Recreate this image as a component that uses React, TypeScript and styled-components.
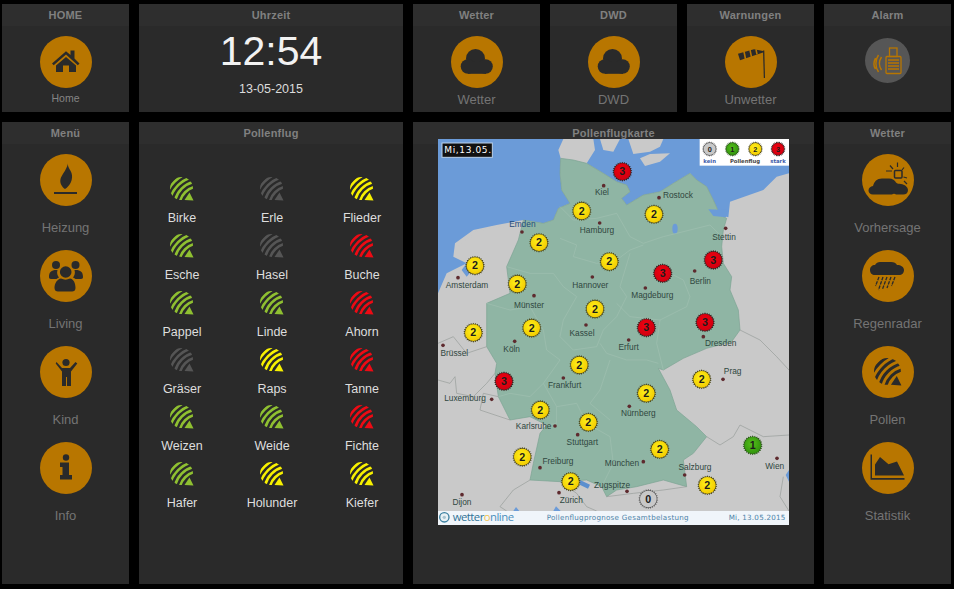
import React, { useId } from "react";
import styled, { createGlobalStyle } from "styled-components";

const Global = createGlobalStyle`
  html, body { margin: 0; background: #000; }
  body { font-family: "Liberation Sans", Arial, sans-serif; }
`;

const Page = styled.div`
  width: 954px;
  height: 589px;
  box-sizing: border-box;
  padding: 4px 0 0 2px;
  display: grid;
  grid-template-columns: 127px 264px 127px 127px 127px 127px;
  grid-template-rows: 108px 462px;
  gap: 10px;
  overflow: hidden;
`;

const Panel = styled.section<{ $span?: number }>`
  background: #2a2a2a;
  grid-column: span ${(p) => p.$span ?? 1};
  display: flex;
  flex-direction: column;
  align-items: center;
  min-width: 0;
`;

const Header = styled.h2`
  margin: 0;
  width: 100%;
  height: 22px;
  flex: none;
  background: #2e2e2e;
  color: #808080;
  font-size: 11px;
  font-weight: 700;
  line-height: 22px;
  letter-spacing: 0.2px;
  text-align: center;
`;

const Item = styled.div`
  display: flex;
  flex-direction: column;
  align-items: center;
  margin-top: 10px;
`;

const Menu = styled.div`
  display: flex;
  flex-direction: column;
  align-items: center;
  gap: 12px;
  padding-top: 10px;
  & > ${Item} { margin-top: 0; }
`;

const Circle = styled.div<{ $size?: number; $muted?: boolean }>`
  width: ${(p) => p.$size ?? 52}px;
  height: ${(p) => p.$size ?? 52}px;
  border-radius: 50%;
  background: ${(p) => (p.$muted ? "#565656" : "#b87600")};
  flex: none;
  & svg { display: block; width: 100%; height: 100%; }
`;

const Label = styled.div<{ $small?: boolean; $tight?: boolean }>`
  color: ${(p) => (p.$small ? "#858585" : "#747474")};
  font-size: ${(p) => (p.$small ? 10.5 : 13)}px;
  line-height: 20px;
  margin-top: ${(p) => (p.$small ? 0 : p.$tight ? 2 : 12)}px;
  white-space: nowrap;
`;

const Clock = styled.div`
  color: #f2f2f2;
  font-size: 41px;
  line-height: 46px;
  margin-top: 2px;
`;

const DateText = styled.div`
  color: #dcdcdc;
  font-size: 12.5px;
  line-height: 16px;
  margin-top: 7px;
`;

const AlarmSlot = styled.div`
  padding-top: 12px;
`;

const PollenGrid = styled.div`
  display: grid;
  grid-template-columns: repeat(3, 90px);
  grid-auto-rows: 57px;
  justify-content: center;
  padding: 33px 0 0 2px;
`;

const PollenCell = styled.div`
  display: flex;
  flex-direction: column;
  align-items: center;
  & svg { display: block; width: 24px; height: 24px; }
`;

const PollenName = styled.div`
  color: #dedede;
  font-size: 12.5px;
  line-height: 16px;
  margin-top: 9px;
`;

const IconPad = styled.div`
  box-sizing: border-box;
  width: 100%;
  height: 100%;
  padding: 12px;
`;

const MapFrame = styled.div`
  margin-top: -5px;
  width: 351px;
  height: 386px;
  flex: none;
  & svg { display: block; }
`;

const CityName = styled.text<{ $blue?: boolean }>`
  font-family: "Liberation Sans", Arial, sans-serif;
  font-size: 25px;
  fill: ${(p) => (p.$blue ? "#1f4c7c" : "#2f4740")};
`;

const MarkDigit = styled.text<{ $small?: boolean }>`
  font-family: "Liberation Sans", Arial, sans-serif;
  font-size: ${(p) => (p.$small ? 22 : 32)}px;
  font-weight: 700;
  fill: #1c1c1c;
  text-anchor: middle;
`;

const LegendText = styled.text<{ $blue?: boolean }>`
  font-family: "DejaVu Sans", sans-serif;
  font-size: 16px;
  font-weight: 700;
  fill: ${(p) => (p.$blue ? "#3a5aa8" : "#444")};
  text-anchor: middle;
`;

const DateTag = styled.text`
  font-family: "DejaVu Sans", sans-serif;
  font-size: 27px;
  fill: #fff;
`;

const FooterText = styled.text<{ $end?: boolean }>`
  font-family: "DejaVu Sans", sans-serif;
  font-size: 21.5px;
  font-weight: 400;
  fill: #4c83a8;
  text-anchor: ${(p) => (p.$end ? "end" : "middle")};
`;

const Brand = styled.text`
  font-family: "Open Sans", "DejaVu Sans", sans-serif;
  font-size: 34px;
  fill: #2f7396;
`;

const DK = "#2a2a2a";

const Svg = ({ children }: { children: React.ReactNode }) => (
  <svg viewBox="0 0 52 52" fill={DK}>{children}</svg>
);

const HomeIcon = () => (
  <Svg>
    <path d="M12 27.5 26 15.3l4.5 3.7v-4.5h4V22.5l5 5-1.7 1.7L26 18.6 13.7 29.2z" />
    <path d="M16 29.6 26 21l10 8.6V36h-7v-6.5h-6V36h-7z" />
  </Svg>
);

const CloudIcon = () => (
  <Svg>
    <circle cx="24.5" cy="22.5" r="9.5" />
    <circle cx="17" cy="30.5" r="7.3" />
    <circle cx="34.5" cy="30.5" r="7.3" />
    <rect x="17" y="26" width="18" height="11.8" />
  </Svg>
);

const SockIcon = () => (
  <Svg>
    <path d="M38 14.500h1.300L40 42h-1.200z" />
    <path d="M13 17.700 29 13.300 38 15 38 16.500 15 24.300z" />
    <path d="M19 15.500l1.500 7.500M25 14l1.500 6.800M31 13.300l1 5" stroke="#b87600" strokeWidth="1.600" fill="none" />
  </Svg>
);

const AlarmIcon = () => (
  <svg viewBox="0 0 45 45" fill="none" stroke="#b87600" strokeWidth="1.3">
    <rect x="24.5" y="10" width="7.5" height="8.5" />
    <rect x="21" y="18.5" width="15" height="17" rx="1" />
    <path d="M23 22h11M23 25h11M23 28h11M23 31h11" />
    <path d="M16.5 19c-2.6 4-2.6 9 0 13M13.5 17c-3.5 5-3.5 12 0 17M10.5 20c-2 4-2 8 0 11" strokeWidth="1.5" />
  </svg>
);

const FlameIcon = () => (
  <Svg>
    <path d="M28 9.500C27.500 13 30 15 31.500 19 33.500 25 30 32 25 35 22 33 19.500 29 20.500 25 21.500 21 26 17 28 9.500z" />
    <rect x="14" y="38" width="23" height="2" />
  </Svg>
);

const PeopleIcon = () => (
  <Svg>
    <circle cx="16" cy="15" r="4" />
    <circle cx="35.5" cy="15" r="4" />
    <path d="M9 27c0-5 2.500-7 7-7h1.500c-1 3 0 5.500 1.500 7.500-1 .4-2 1-2.500 1.500H11c-1.500 0-2-1-2-2z" />
    <path d="M43 27c0-5-2.500-7-7-7h-1.500c1 3 0 5.500-1.500 7.500 1 .4 2 1 2.500 1.500H41c1.500 0 2-1 2-2z" />
    <circle cx="25.700" cy="22" r="5.800" />
    <path d="M14.500 38c0-5 3-9 6.500-9.500 3 1.500 6 1.500 9 0 3.500.5 5.500 4.500 5.500 9.500 0 2.500-1.500 3.500-3.500 3.500H18c-2 0-3.500-1-3.500-3.500z" />
  </Svg>
);

const KidIcon = () => (
  <Svg>
    <circle cx="26" cy="16.500" r="3.600" />
    <path d="M16.500 16 22 22h8l5.500-6 1.800 1.500-6.300 8V40h-4v-9h-1v9h-4V25.500l-6.300-8z" />
  </Svg>
);

const InfoIcon = () => (
  <Svg>
    <circle cx="26" cy="15.500" r="3.200" />
    <path d="M20 20.500h9V33h3v4.500H20V33h2.500v-8H20z" />
  </Svg>
);

const SunCloudIcon = () => (
  <Svg>
    <path d="M11 40.500c-3 0-4.500-2-4.500-4 0-2.500 2-4 4.500-4.500 1-4.500 4-7.500 9-7.500h7c3.500 0 6 2 7 4 1 1.500 3 1 5 1.500 3.500.5 7 3 7 6 0 3-2 4.500-5 4.500H34c-1-1-3-1-4 0z" />
    <rect x="32.500" y="16.500" width="7.500" height="7.500" rx="1" fill="none" stroke={DK} strokeWidth="1.500" />
    <path d="M24 17h6M28 11.500l3 3.500M35.500 8.500v4.500M42 13.500l-2 2.500M45 24l-3.500-1M45 30l-3-3" fill="none" stroke={DK} strokeWidth="1.200" />
  </Svg>
);

const RainIcon = () => (
  <Svg>
    <path d="M8 20c0-3 2-5 5-5 1-2 3-3 5-3h11c3 0 5 1 6 3 4 0 7 2 7 5 0 3-2 5-5 5H13c-3 0-5-2-5-5z" />
    <path d="M17 27l-3.500 9M21 27l-4.500 13M25 27l-4.500 12M29 27l-4 11M33 27l-3.500 9" fill="none" stroke={DK} strokeWidth="1.300" strokeDasharray="3.500 1" />
  </Svg>
);

const PollenShape = ({ color }: { color: string }) => {
  const id = useId();
  return (
    <svg viewBox="0 0 24 24">
      <clipPath id={id}>
        <circle cx="11.500" cy="11.500" r="11.500" />
      </clipPath>
      <g clipPath={`url(#${id})`} fill="none" stroke={color} strokeWidth="2.600">
        <circle cx="29" cy="29" r="19.500" />
        <circle cx="29" cy="29" r="24.500" />
        <circle cx="29" cy="29" r="29.500" />
        <circle cx="29" cy="29" r="34.500" />
      </g>
      <path d="M23.500 23.500 14.500 23 19.500 15.500z" fill={color} />
    </svg>
  );
};

const PollenIcon = () => (
  <IconPad>
    <PollenShape color={DK} />
  </IconPad>
);

const ChartIcon = () => (
  <Svg>
    <path d="M8.500 12.500h1.500V36h32.500v1.800H8.500z" />
    <path d="M13 33.500V22.500l5-7.500 8.500 7.300 8.500-2.800 7 14z" />
  </Svg>
);

const Sun = ({ x, y, level, small }: { x: number; y: number; level: number; small?: boolean }) => {
  const id = useId();
  const r = small ? 23 : 30;
  const stops: [string, string][] = [
    ["#c8c8c8", "#c8c8c8"],
    ["#55c01a", "#2f8f0c"],
    ["#fff21a", "#f2c800"],
    ["#f2000f", "#cc0010"],
  ];
  const pts: string[] = [];
  const n = 26;
  for (let i = 0; i < n * 2; i++) {
    const rad = i % 2 ? r : r - 4.500;
    const a = (i * Math.PI) / n;
    pts.push(`${(x + rad * Math.cos(a)).toFixed(1)},${(y + rad * Math.sin(a)).toFixed(1)}`);
  }
  const edge = ["#5c5c5c", "#2e5a1c", "#4f4a18", "#3c2020"][level];
  return (
    <g>
      <radialGradient id={id} cx="45%" cy="40%" r="65%">
        <stop offset="0%" stopColor={stops[level][0]} />
        <stop offset="100%" stopColor={stops[level][1]} />
      </radialGradient>
      <polygon points={pts.join(" ")} fill={edge} />
      <circle cx={x} cy={y} r={r - 5} fill={`url(#${id})`} />
      <MarkDigit x={x} y={y + (small ? 7.500 : 11)} $small={small}>
        {level}
      </MarkDigit>
    </g>
  );
};

const cities: [string, number, number, number, number, boolean?][] = [
  ["Kiel", 516, 196, 521, 167],
  ["Rostock", 744, 203, 687, 203],
  ["Emden", 277, 291, 276, 306, true],
  ["Hamburg", 501, 309, 509, 279],
  ["Stettin", 882, 329, 887, 295],
  ["Amsterdam", 111, 473, 84, 443],
  ["Hannover", 481, 473, 487, 441],
  ["Berlin", 811, 461, 794, 423],
  ["Magdeburg", 667, 504, 646, 474],
  ["Münster", 297, 533, 312, 497],
  ["Kassel", 456, 619, 468, 585],
  ["Köln", 245, 665, 254, 634],
  ["Erfurt", 596, 661, 596, 630],
  ["Dresden", 872, 649, 820, 620],
  ["Brüssel", 73, 677, 39, 646],
  ["Prag", 908, 733, 879, 748],
  ["Frankfurt", 404, 773, 400, 744],
  ["Luxemburg", 105, 814, 185, 808],
  ["Karlsruhe", 311, 896, 375, 888],
  ["Nürnberg", 625, 858, 598, 829],
  ["Stuttgart", 457, 946, 443, 914],
  ["Freiburg", 384, 1002, 330, 1013],
  ["München", 576, 1007, 640, 995],
  ["Salzburg", 795, 1019, 764, 1035],
  ["Wien", 1034, 1016, 1041, 985],
  ["Zugspitze", 546, 1073, 591, 1084],
  ["Dijon", 96, 1125, 96, 1094],
  ["Zürich", 424, 1119, 387, 1088],
];

const suns: [number, number, number][] = [
  [577, 125, 3], [455, 243, 2], [672, 253, 2], [327, 338, 2], [135, 407, 2], [538, 395, 2],
  [698, 430, 3], [850, 390, 3], [262, 462, 2], [495, 537, 2], [305, 594, 2], [130, 608, 2],
  [649, 593, 3], [825, 577, 3], [448, 705, 2], [222, 754, 3], [815, 748, 2], [649, 790, 2],
  [331, 840, 2], [475, 877, 2], [277, 981, 2], [689, 958, 2], [422, 1055, 2], [968, 946, 1],
  [832, 1066, 2], [655, 1107, 0],
];

const GERMANY =
  "392,85 430,90 470,100 520,130 560,155 590,165 600,185 575,205 590,225 640,195 690,185 730,160 780,130 800,150 830,170 850,210 870,255 890,265 880,300 875,350 880,400 905,440 900,480 925,540 930,600 905,635 830,655 760,685 700,720 685,715 720,780 740,840 800,890 830,920 790,970 760,990 770,1070 700,1050 620,1070 560,1080 530,1100 515,1070 470,1050 390,1055 300,1050 310,1000 330,910 350,885 300,860 240,870 205,800 195,730 200,700 170,650 170,520 240,490 230,410 265,330 270,310 280,270 340,280 370,270 385,235 420,220 395,180 390,130";

const SEA_W =
  "24,27 400,27 385,60 392,85 390,130 395,180 420,220 385,235 370,270 340,280 280,270 200,285 130,300 75,340 70,380 110,400 50,430 24,490";

const SEA_E =
  "490,27 495,60 470,100 520,130 560,155 590,165 600,185 575,205 590,225 640,195 690,185 730,160 780,130 800,150 830,170 850,210 870,255 895,262 900,215 1000,180 1040,140 1077,130 1077,27";

const BORDERS = [
  "390,230 430,270 500,265 560,250 600,320 640,340 700,320 780,300 840,285 875,320",
  "390,325 440,345 430,380 500,400 560,390 600,360 640,345",
  "230,410 300,430 370,430 400,470 440,500 400,570 390,620 430,660 500,650 520,600 560,560 590,500 570,470 600,370",
  "560,520 600,560 690,570 770,530 780,500 760,450 700,420",
  "690,570 680,640 700,720",
  "510,640 530,670 590,690 650,690 685,700",
  "170,520 240,540 300,530 340,600 350,660 390,690 340,760 300,800 240,790 205,800",
  "340,760 380,830 380,880 350,885",
  "380,830 440,820 470,880 540,920 550,1000 515,1070",
  "540,690 510,780 480,820 540,870",
];

const FOREIGN = [
  "24,640 70,620 110,670 170,650",
  "24,750 60,760 75,740 80,790 130,800 170,760 195,730",
  "205,800 160,790 150,840 240,870",
  "300,1050 250,1080 210,1130 230,1143",
  "390,1055 440,1090 470,1130 500,1143",
  "530,1100 610,1090 700,1080 770,1070",
  "830,920 870,945 910,920 930,885 1000,920 1077,915",
  "930,600 990,630 1040,680 1077,720",
  "1060,1040 1050,1100 1077,1143",
];

const GermanyMap = () => (
  <svg viewBox="24 27 1053 1158" width="351" height="386">
    <rect x="24" y="27" width="1053" height="1158" fill="#c9c9c9" />
    <polygon points={SEA_W} fill="#6b9bd8" />
    <polygon points={SEA_E} fill="#6b9bd8" />
    <polygon points="510,27 570,27 550,65 520,60" fill="#c9c9c9" />
    <polygon points="595,27 700,27 690,50 660,65 610,72" fill="#c9c9c9" />
    <polygon points="630,85 660,72 720,70 690,95 645,108" fill="#c9c9c9" />
    <path d="M78 348l50-32M135 305l55-14M200 292l60-6" fill="none" stroke="#c9c9c9" strokeWidth="4" />
    <path d="M110 400l-15 20 15 20 25-30z" fill="#6b9bd8" />
    <polygon points={GERMANY} fill="#8fb5a4" stroke="#7ca392" strokeWidth="2" />
    <polygon points="835,238 890,240 888,262 850,258" fill="#6b9bd8" />
    <ellipse cx="735" cy="296" rx="8" ry="15" fill="#6b9bd8" />
    <path d="M450 1050l30 14-6 12-25-12z" fill="#5b8fcf" />
    <path d="M1077 1020l-10 15 10 20zM250 1143l8-12 10 12zM370 1143l8-14 14 14z" fill="#6b9bd8" />
    {BORDERS.map((b) => (
      <polyline key={b} points={b} fill="none" stroke="#a0bfb1" strokeWidth="2" />
    ))}
    {FOREIGN.map((b) => (
      <polyline key={b} points={b} fill="none" stroke="#969b99" strokeWidth="2" />
    ))}
    {cities.map(([name, tx, ty, dx, dy, blue]) => (
      <g key={name}>
        <circle cx={dx} cy={dy} r="5.500" fill="#5e2a2e" />
        <CityName x={tx} y={ty} textAnchor="middle" $blue={blue}>
          {name}
        </CityName>
      </g>
    ))}
    {suns.map(([x, y, l], i) => (
      <Sun key={i} x={x} y={y} level={l} />
    ))}
    <rect x="809" y="27" width="268" height="80" fill="#fff" />
    <Sun x={839} y={57} level={0} small />
    <Sun x={907} y={57} level={1} small />
    <Sun x={976} y={57} level={2} small />
    <Sun x={1044} y={57} level={3} small />
    <LegendText x="839" y="99" $blue>kein</LegendText>
    <LegendText x="945" y="99">Pollenflug</LegendText>
    <LegendText x="1044" y="99" $blue>stark</LegendText>
    <rect x="36" y="39" width="151" height="43" fill="#111" stroke="#bcd2ea" strokeWidth="3" />
    <DateTag x="43" y="70" textLength="140">Mi,13.05.</DateTag>
    <rect x="24" y="1143" width="1053" height="42" fill="#f0f5fa" />
    <circle cx="43" cy="1162" r="14" fill="#e8f0f4" stroke="#3a7f9f" strokeWidth="4" />
    <circle cx="43" cy="1162" r="5" fill="#a8c4d0" />
    <Brand x="68" y="1174" textLength="184">
      wetter<tspan fill="#f0c350">o</tspan>
      <tspan fill="#4b8fbd">nline</tspan>
    </Brand>
    <FooterText x="563" y="1170" textLength="426">Pollenflugprognose Gesamtbelastung</FooterText>
    <FooterText x="1066" y="1170" $end textLength="170">Mi, 13.05.2015</FooterText>
  </svg>
);

const GREEN = "#8fc031";
const GREY = "#555555";
const YELLOW = "#f7f000";
const RED = "#ee0a14";

const pollen: [string, string][] = [
  ["Birke", GREEN], ["Erle", GREY], ["Flieder", YELLOW],
  ["Esche", GREEN], ["Hasel", GREY], ["Buche", RED],
  ["Pappel", GREEN], ["Linde", GREEN], ["Ahorn", RED],
  ["Gräser", GREY], ["Raps", YELLOW], ["Tanne", RED],
  ["Weizen", GREEN], ["Weide", GREEN], ["Fichte", RED],
  ["Hafer", GREEN], ["Holunder", YELLOW], ["Kiefer", YELLOW],
];

const Tile = ({ title, label, icon, small }: { title: string; label: string; icon: React.ReactNode; small?: boolean }) => (
  <Panel>
    <Header>{title}</Header>
    <Item>
      <Circle>{icon}</Circle>
      <Label $tight $small={small}>{label}</Label>
    </Item>
  </Panel>
);

const MenuPanel = ({ title, items }: { title: string; items: [string, React.ReactNode][] }) => (
  <Panel>
    <Header>{title}</Header>
    <Menu>
      {items.map(([label, icon]) => (
        <Item key={label}>
          <Circle>{icon}</Circle>
          <Label>{label}</Label>
        </Item>
      ))}
    </Menu>
  </Panel>
);

export default function App() {
  return (
    <>
      <Global />
      <Page>
        <Tile title="HOME" label="Home" icon={<HomeIcon />} small />
        <Panel>
          <Header>Uhrzeit</Header>
          <Clock>12:54</Clock>
          <DateText>13-05-2015</DateText>
        </Panel>
        <Tile title="Wetter" label="Wetter" icon={<CloudIcon />} />
        <Tile title="DWD" label="DWD" icon={<CloudIcon />} />
        <Tile title="Warnungen" label="Unwetter" icon={<SockIcon />} />
        <Panel>
          <Header>Alarm</Header>
          <AlarmSlot>
            <Circle $size={45} $muted><AlarmIcon /></Circle>
          </AlarmSlot>
        </Panel>

        <MenuPanel
          title="Menü"
          items={[
            ["Heizung", <FlameIcon />],
            ["Living", <PeopleIcon />],
            ["Kind", <KidIcon />],
            ["Info", <InfoIcon />],
          ]}
        />
        <Panel>
          <Header>Pollenflug</Header>
          <PollenGrid>
            {pollen.map(([name, color]) => (
              <PollenCell key={name}>
                <PollenShape color={color} />
                <PollenName>{name}</PollenName>
              </PollenCell>
            ))}
          </PollenGrid>
        </Panel>
        <Panel $span={3}>
          <Header>Pollenflugkarte</Header>
          <MapFrame><GermanyMap /></MapFrame>
        </Panel>
        <MenuPanel
          title="Wetter"
          items={[
            ["Vorhersage", <SunCloudIcon />],
            ["Regenradar", <RainIcon />],
            ["Pollen", <PollenIcon />],
            ["Statistik", <ChartIcon />],
          ]}
        />
      </Page>
    </>
  );
}
